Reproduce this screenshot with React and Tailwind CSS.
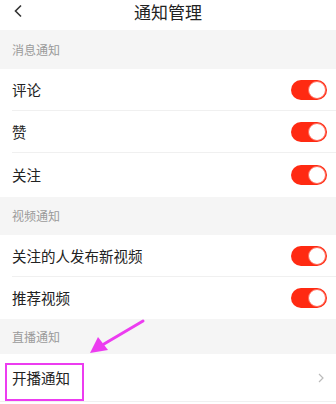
import React, { useState } from 'react';

const Toggle = ({ on, onChange }) => (
  <button
    onClick={onChange}
    className={`w-[36px] h-[20px] rounded-full flex items-center p-[1px] ${on ? 'bg-[#ff2a12] justify-end' : 'bg-[#e5e5e5] justify-start'}`}
  >
    <span className="w-[18px] h-[18px] rounded-full bg-white border border-[#ff6a5a]" />
  </button>
);

const SectionTitle = ({ children, h }) => (
  <div className={`${h} bg-[#f5f5f5] flex items-center px-3 text-[12px] text-[#9a9a9a]`}>
    {children}
  </div>
);

const Row = ({ label, on, onChange, last, h = 'h-[42px]' }) => (
  <div className={`${h} bg-white ml-3 pr-[9px] flex items-center justify-between ${last ? '' : 'border-b border-[#f0f0f0]'}`}>
    <span className="text-[14.5px] text-[#222]">{label}</span>
    <Toggle on={on} onChange={onChange} />
  </div>
);

export default function App() {
  const [toggles, setToggles] = useState({
    comment: true,
    like: true,
    follow: true,
    newVideo: true,
    recommend: true,
  });

  const flip = (key) => setToggles((t) => ({ ...t, [key]: !t[key] }));

  return (
    <div
      className="relative w-[336px] h-[404px] overflow-hidden bg-white"
      style={{ fontFamily: '"Noto Sans CJK SC", "Noto Sans", sans-serif' }}
    >
      <div className="h-[30px] flex items-center justify-center relative pb-[6px]">
        <svg className="absolute left-[13px] top-[4px]" width="12" height="14" viewBox="0 0 12 14">
          <path d="M8 1.5 L2.5 7 L8 12.5" fill="none" stroke="#333" strokeWidth="1.6" />
        </svg>
        <span className="text-[17px] text-[#222]">通知管理</span>
      </div>

      <SectionTitle h="h-[39px]">消息通知</SectionTitle>
      <div className="bg-white">
        <Row label="评论" on={toggles.comment} onChange={() => flip('comment')} />
        <Row label="赞" on={toggles.like} onChange={() => flip('like')} />
        <Row label="关注" on={toggles.follow} onChange={() => flip('follow')} last h="h-[44px]" />
      </div>

      <SectionTitle h="h-[38px]">视频通知</SectionTitle>
      <div className="bg-white">
        <Row label="关注的人发布新视频" on={toggles.newVideo} onChange={() => flip('newVideo')} />
        <Row label="推荐视频" on={toggles.recommend} onChange={() => flip('recommend')} last />
      </div>

      <SectionTitle h="h-[35px]">直播通知</SectionTitle>
      <div className="h-[48px] bg-white pl-3 pr-[12px] flex items-center justify-between border-b border-[#f0f0f0]">
        <span className="text-[14.5px] text-[#222]">开播通知</span>
        <svg width="6" height="10" viewBox="0 0 6 10">
          <path d="M1 1 L5 5 L1 9" fill="none" stroke="#bbb" strokeWidth="1.2" />
        </svg>
      </div>

      {/* annotation overlay */}
      <div className="absolute left-[5px] top-[363px] w-[79px] h-[38px] border-2 border-[#ec3cf0]" />
      <svg className="absolute left-0 top-0" width="336" height="404" viewBox="0 0 336 404">
        <path d="M143 321 L104 344" stroke="#ec3cf0" strokeWidth="3" strokeLinecap="round" />
        <path d="M90 353 L98 337 L108 350 Z" fill="#ec3cf0" />
      </svg>
    </div>
  );
}
